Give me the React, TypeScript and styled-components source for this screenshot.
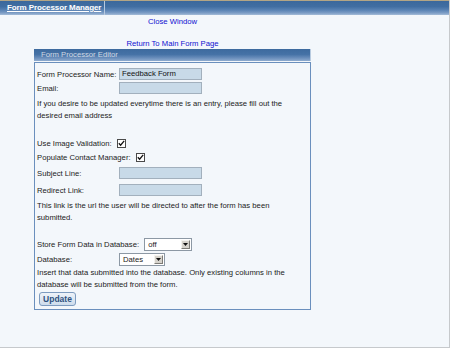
import styled, { createGlobalStyle } from 'styled-components';

const GlobalStyle = createGlobalStyle`
  html, body {
    margin: 0;
    padding: 0;
    background: #f3f7fb;
  }
  body {
    font-family: "Liberation Sans", Arial, sans-serif;
    font-size: 7.7px;
    color: #222;
  }
`;

const Page = styled.div`
  width: 449px;
  height: 347px;
  border-right: 1px solid #c6c9cc;
  border-bottom: 1px solid #c6c9cc;
  background: #f3f7fb;
`;

const barGradient = `linear-gradient(to bottom, #3b689c 0%, #416ea2 40%, #5a83b4 65%, #7b9cc5 85%, #a4bcd8 100%)`;

const TopBar = styled.div`
  height: 15px;
  box-sizing: border-box;
  border-top: 1px solid #b3a585;
  background: ${barGradient};
  display: flex;
`;

const AppTab = styled.div`
  width: 105px;
  box-sizing: border-box;
  border-right: 1px solid #b7c9df;
  padding-left: 7px;
  display: flex;
  align-items: center;
`;

const AppTitle = styled.a`
  color: #fff;
  font-weight: bold;
  font-size: 8px;
  letter-spacing: -0.1px;
  text-decoration: underline;
  line-height: 10px;
`;

const Column = styled.div`
  margin-left: 34px;
  width: 277px;
`;

const NavLink = styled.a<{ $gap?: number }>`
  display: block;
  text-align: center;
  color: #1010d0;
  text-decoration: none;
  line-height: 11px;
  margin-top: ${(p) => p.$gap ?? 0}px;
`;

const PanelHeader = styled.div`
  height: 12px;
  box-sizing: border-box;
  background: linear-gradient(to bottom, #3d6a9e 0%, #4572a6 45%, #6489b8 70%, #8eabcf 100%);
  border-right: 1px solid #b8cbe0;
  color: #ced8e3;
  padding-left: 7px;
  line-height: 12px;
  margin-bottom: 1px;
`;

const PanelBody = styled.div`
  border: 1px solid #6a8fbd;
  padding: 3px 0 3px 2px;
`;

const FieldRow = styled.div<{ $h?: number; $gap?: number }>`
  display: flex;
  align-items: center;
  height: ${(p) => p.$h ?? 14}px;
  margin-top: ${(p) => p.$gap ?? 0}px;
`;

const Label = styled.span<{ $w?: number }>`
  width: ${(p) => (p.$w ? `${p.$w}px` : 'auto')};
  flex-shrink: 0;
  margin-right: ${(p) => (p.$w ? 0 : 5)}px;
  white-space: nowrap;
`;

const TextBox = styled.div`
  width: 83px;
  height: 12px;
  box-sizing: border-box;
  background: #c8dae8;
  border: 1px solid #a2b0bd;
  padding-left: 2px;
  line-height: 10px;
  color: #111;
`;

const Note = styled.p<{ $gap?: number }>`
  margin: ${(p) => p.$gap ?? 0}px 0 0;
  line-height: 11.5px;
  width: 262px;
`;

const Check = styled.span`
  display: inline-flex;
  width: 9px;
  height: 9px;
  box-sizing: border-box;
  border: 1px solid #4a4a4a;
  background: #fff;
  align-items: center;
  justify-content: center;
`;

const Select = styled.div<{ $w: number }>`
  width: ${(p) => p.$w}px;
  height: 13px;
  box-sizing: border-box;
  border: 1px solid #8c98a4;
  background: #fff;
  display: flex;
  align-items: center;
  justify-content: space-between;
  padding: 0 1px 0 3px;
`;

const SelectArrow = styled.span`
  width: 9px;
  height: 9px;
  box-sizing: border-box;
  background: #d6d3cc;
  border: 1px solid;
  border-color: #f4f3ef #7d7b76 #7d7b76 #f4f3ef;
  display: flex;
  align-items: center;
  justify-content: center;
`;

const UpdateButton = styled.button`
  margin: 2px 0 0 2px;
  width: 37px;
  height: 14px;
  padding: 0;
  box-sizing: border-box;
  border: 1px solid #7d9bbf;
  border-radius: 3px;
  background: linear-gradient(to bottom, #eef3f9, #cddcec);
  color: #2f527f;
  font-family: "Liberation Sans", Arial, sans-serif;
  font-weight: bold;
  font-size: 8.5px;
  line-height: 12px;
`;

const CheckBox = () => (
  <Check>
    <svg width="7" height="7" viewBox="0 0 7 7">
      <path d="M0.8 3.2 L2.6 5.2 L6.2 0.9" fill="none" stroke="#111" strokeWidth="1.3" />
    </svg>
  </Check>
);

const DropDown = ({ value, width }: { value: string; width: number }) => (
  <Select $w={width}>
    <span>{value}</span>
    <SelectArrow>
      <svg width="5" height="3" viewBox="0 0 5 3">
        <path d="M0 0 H5 L2.5 3 Z" fill="#111" />
      </svg>
    </SelectArrow>
  </Select>
);

export default function App() {
  return (
    <>
      <GlobalStyle />
      <Page>
        <TopBar>
          <AppTab>
            <AppTitle href="#">Form Processor Manager</AppTitle>
          </AppTab>
        </TopBar>
        <Column>
          <NavLink href="#" $gap={1}>Close Window</NavLink>
          <NavLink href="#" $gap={11}>Return To Main Form Page</NavLink>
          <PanelHeader>Form Processor Editor</PanelHeader>
          <PanelBody>
            <FieldRow $gap={1}>
              <Label $w={82}>Form Processor Name:</Label>
              <TextBox>Feedback Form</TextBox>
            </FieldRow>
            <FieldRow>
              <Label $w={82}>Email:</Label>
              <TextBox />
            </FieldRow>
            <Note $gap={3}>
              If you desire to be updated everytime there is an entry, please fill out the desired email address
            </Note>
            <FieldRow $gap={15}>
              <Label>Use Image Validation:</Label>
              <CheckBox />
            </FieldRow>
            <FieldRow>
              <Label>Populate Contact Manager:</Label>
              <CheckBox />
            </FieldRow>
            <FieldRow $h={16} $gap={1}>
              <Label $w={82}>Subject Line:</Label>
              <TextBox />
            </FieldRow>
            <FieldRow $h={16} $gap={1}>
              <Label $w={82}>Redirect Link:</Label>
              <TextBox />
            </FieldRow>
            <Note $gap={2}>
              This link is the url the user will be directed to after the form has been submitted.
            </Note>
            <FieldRow $gap={14}>
              <Label>Store Form Data in Database:</Label>
              <DropDown value="off" width={48} />
            </FieldRow>
            <FieldRow $gap={1}>
              <Label $w={82}>Database:</Label>
              <DropDown value="Dates" width={46} />
            </FieldRow>
            <Note $gap={1}>
              Insert that data submitted into the database. Only existing columns in the database will be submitted from the form.
            </Note>
            <UpdateButton>Update</UpdateButton>
          </PanelBody>
        </Column>
      </Page>
    </>
  );
}
